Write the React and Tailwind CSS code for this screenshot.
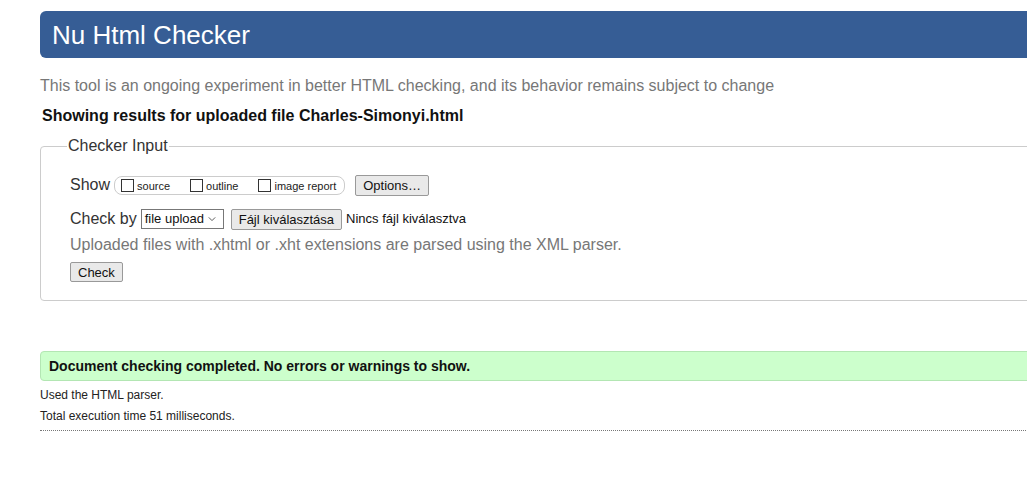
const Checkbox = ({ label }) => (
  <label className="flex items-center">
    <span className="w-[13px] h-[13px] border border-[#333] bg-white mr-[3px]" />
    <span className="text-[11px] text-[#222] mt-[3px]">{label}</span>
  </label>
);

const App = () => {
  return (
    <div className="w-full min-h-screen overflow-hidden bg-white font-['Liberation_Sans',Arial,sans-serif] text-[#222]">
      <div className="ml-[40px] w-[1060px]">
        {/* Header */}
        <header className="mt-[11px] h-[47px] bg-[#365d95] rounded-l-[6px] flex items-center pl-[12px]">
          <h1 className="text-[26px] text-white leading-none">Nu Html Checker</h1>
        </header>

        <p className="mt-[18px] text-[16px] text-[#777] leading-[20px]">
          This tool is an ongoing experiment in better HTML checking, and its behavior remains subject to change
        </p>
        <p className="mt-[10px] ml-[2px] text-[16px] font-bold text-[#111] leading-[20px]">
          Showing results for uploaded file Charles-Simonyi.html
        </p>

        {/* Checker Input */}
        <fieldset className="mt-[10px] border border-[#ccc] rounded-[4px] pl-[29px] h-[165px]">
          <legend className="ml-[-3px] px-[1px] text-[16px] text-[#333] leading-[20px]">Checker Input</legend>

          <div className="mt-[18px] flex items-center h-[22px]">
            <span className="text-[16px] text-[#333]">Show</span>
            <div className="ml-[4px] flex items-center gap-[20px] h-[19px] pl-[6px] pr-[8px] border border-[#ccc] rounded-[8px]">
              <Checkbox label="source" />
              <Checkbox label="outline" />
              <Checkbox label="image report" />
            </div>
            <button className="ml-[10px] h-[21px] px-[7px] text-[13px] text-[#111] bg-[#e9e9e9] border border-[#999] rounded-[2px]">
              Options…
            </button>
          </div>

          <div className="mt-[12px] flex items-center h-[22px]">
            <span className="text-[16px] text-[#333]">Check by</span>
            <div className="ml-[4px] h-[20px] w-[83px] border border-[#777] bg-white flex items-center pl-[3px] text-[13px] text-[#111]">
              file upload
              <svg className="ml-[4px] w-[8px] h-[8px]" viewBox="0 0 10 10" fill="none" stroke="#555" strokeWidth="1.2">
                <path d="M1 3l4 4 4-4" />
              </svg>
            </div>
            <button className="ml-[7px] h-[21px] px-[7px] text-[13px] text-[#111] bg-[#e9e9e9] border border-[#999] rounded-[2px]">
              Fájl kiválasztása
            </button>
            <span className="ml-[4px] text-[13px] text-[#111]">Nincs fájl kiválasztva</span>
          </div>

          <p className="mt-[5px] text-[16px] text-[#777] leading-[20px]">
            Uploaded files with .xhtml or .xht extensions are parsed using the XML parser.
          </p>

          <button className="mt-[7px] h-[20px] px-[7px] text-[13px] text-[#111] bg-[#e9e9e9] border border-[#999] rounded-[2px]">
            Check
          </button>
        </fieldset>

        {/* Result */}
        <div className="mt-[50px] h-[30px] bg-[#ccffcc] border border-[#b3e6b3] rounded-l-[4px] flex items-center pl-[8px]">
          <p className="text-[14px] font-bold text-[#111]">Document checking completed. No errors or warnings to show.</p>
        </div>
        <p className="mt-[6px] text-[12px] text-[#222] leading-[16px]">Used the HTML parser.</p>
        <p className="mt-[5px] text-[12px] text-[#222] leading-[16px]">Total execution time 51 milliseconds.</p>
        <div className="mt-[6px] border-b border-dotted border-[#777]" />
      </div>
    </div>
  );
};

export default App;
